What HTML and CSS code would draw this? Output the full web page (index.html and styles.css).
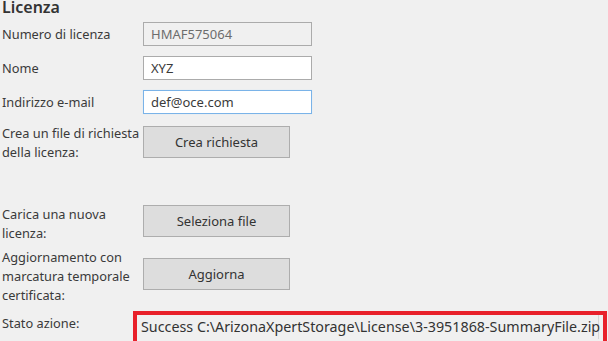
FILE: index.html
```html
<!DOCTYPE html>
<html lang="it">
<head>
    <meta charset="UTF-8">
    <meta name="viewport" content="width=device-width, initial-scale=1.0">
    <title>Licenza</title>
    <link rel="stylesheet" href="styles.css">
</head>
<body>
    <div class="panel">
        <h2 class="title">Licenza</h2>

        <div class="row row-field">
            <label class="label">Numero di licenza</label>
            <input class="field field-readonly" type="text" value="HMAF575064" readonly>
        </div>

        <div class="row row-field">
            <label class="label">Nome</label>
            <input class="field" type="text" value="XYZ">
        </div>

        <div class="row row-field row-last">
            <label class="label">Indirizzo e-mail</label>
            <input class="field field-focus" type="text" value="def@oce.com">
        </div>

        <div class="row row-request">
            <label class="label">Crea un file di richiesta<br>della licenza:</label>
            <button class="btn">Crea richiesta</button>
        </div>

        <div class="row row-upload">
            <label class="label">Carica una nuova<br>licenza:</label>
            <button class="btn">Seleziona file</button>
        </div>

        <div class="row row-update">
            <label class="label">Aggiornamento con<br>marcatura temporale<br>certificata:</label>
            <button class="btn">Aggiorna</button>
        </div>

        <div class="row row-status">
            <label class="label">Stato azione:</label>
            <div class="status">
                <div class="status-text">Success C:\ArizonaXpertStorage\License\3-3951868-SummaryFile.zip</div>
            </div>
        </div>
    </div>
</body>
</html>
```

FILE: styles.css
```css
body {
    margin: 0;
    background-color: #f0f0f0;
    font-family: "Noto Sans", "Open Sans", sans-serif;
    color: #3a3a3a;
    overflow: hidden;
}
.panel {
    padding-left: 2px;
}
.title {
    margin: 0;
    height: 22px;
    font-size: 16px;
    line-height: 14px;
    font-weight: 600;
    color: #333;
}
.row {
    display: flex;
    align-items: flex-start;
}
.label {
    width: 141px;
    flex: none;
    font-size: 12.8px;
    line-height: 19px;
}
.row-field {
    height: 24px;
    align-items: center;
    margin-bottom: 10px;
}
.row-last {
    margin-bottom: 0;
}
.field {
    box-sizing: border-box;
    width: 169px;
    height: 24px;
    margin: 0;
    padding: 0 7px;
    border: 1px solid #ababab;
    background: #fff;
    font-family: inherit;
    font-size: 13px;
    color: #3a3a3a;
    outline: none;
}
.field-readonly {
    background: #f0f0f0;
    color: #6d6d6d;
}
.field-focus {
    border-color: #7ab3e8;
    box-shadow: 0 0 1px #cde3f8;
}
.btn {
    box-sizing: border-box;
    width: 147px;
    height: 32px;
    margin: 0;
    border: 1px solid #adadad;
    background: #dddddd;
    font-family: inherit;
    font-size: 13px;
    color: #333;
}
.row-request {
    margin-top: 10px;
}
.row-request .btn {
    margin-top: 2px;
}
.row-upload {
    margin-top: 43px;
}
.row-update {
    margin-top: 5px;
}
.row-update .btn {
    margin-top: 10px;
}
.row-status {
    margin-top: 6px;
}
.row-status .label {
    margin-top: 3px;
}
.status {
    box-sizing: border-box;
    width: 474px;
    height: 36px;
    margin-left: -10px;
    border: 4px solid #e8202a;
    padding: 0 4px;
}
.status-text {
    font-size: 14.3px;
    line-height: 24px;
    white-space: nowrap;
    color: #333;
    border-right: 1px solid #d6d6d6;
}
```
